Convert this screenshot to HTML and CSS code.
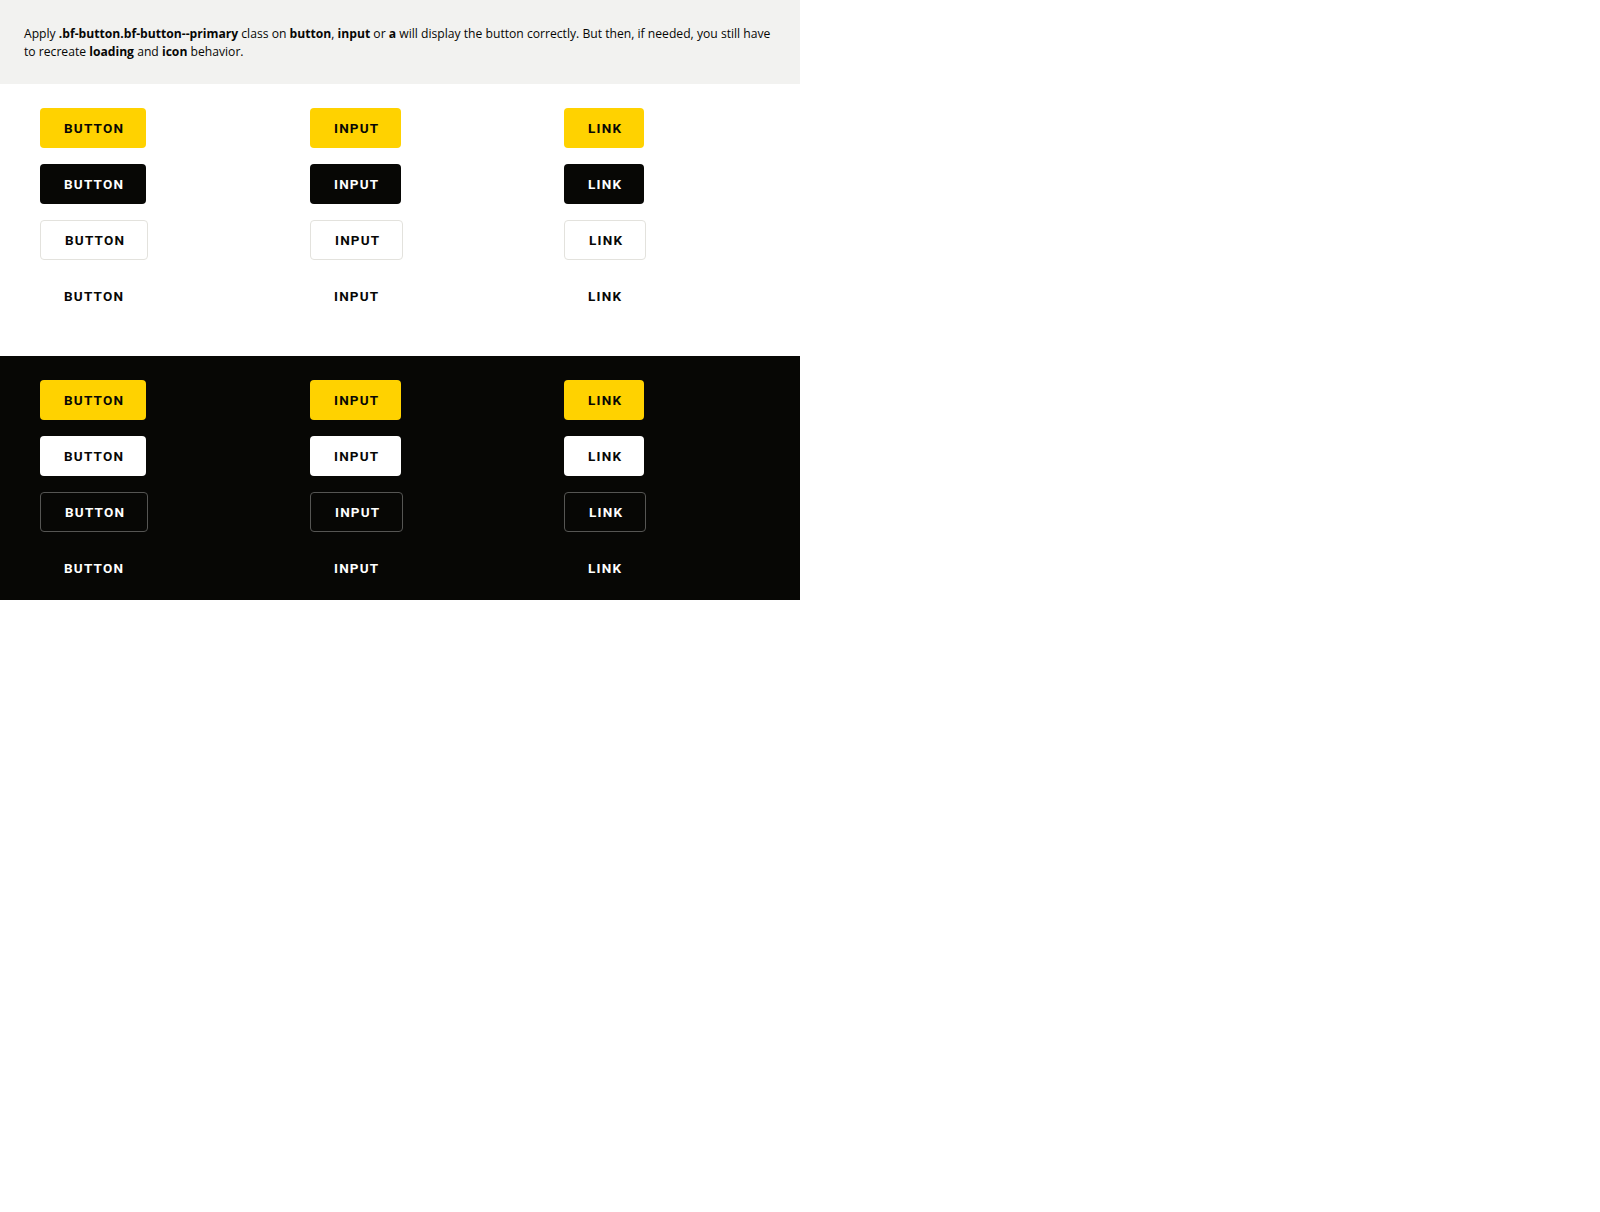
FILE: index.html
```html
<!DOCTYPE html>
<html>
<head>
<meta charset="utf-8">
<link rel="stylesheet" href="styles.css">
</head>
<body>
<div class="page">
  <div class="note">Apply <b>.bf-button.bf-button--primary</b> class on <b>button</b>, <b>input</b> or <b>a</b> will display the button correctly. But then, if needed, you still have to recreate <b>loading</b> and <b>icon</b> behavior.</div>
  <div class="demo demo--light">
    <div class="col">
      <span class="btn btn--primary">BUTTON</span>
      <span class="btn btn--secondary">BUTTON</span>
      <span class="btn btn--outline">BUTTON</span>
      <span class="btn btn--ghost">BUTTON</span>
    </div>
    <div class="col">
      <span class="btn btn--primary">INPUT</span>
      <span class="btn btn--secondary">INPUT</span>
      <span class="btn btn--outline">INPUT</span>
      <span class="btn btn--ghost">INPUT</span>
    </div>
    <div class="col">
      <span class="btn btn--primary">LINK</span>
      <span class="btn btn--secondary">LINK</span>
      <span class="btn btn--outline">LINK</span>
      <span class="btn btn--ghost">LINK</span>
    </div>
  </div>
  <div class="demo demo--dark">
    <div class="col">
      <span class="btn btn--primary">BUTTON</span>
      <span class="btn btn--secondary">BUTTON</span>
      <span class="btn btn--outline">BUTTON</span>
      <span class="btn btn--ghost">BUTTON</span>
    </div>
    <div class="col">
      <span class="btn btn--primary">INPUT</span>
      <span class="btn btn--secondary">INPUT</span>
      <span class="btn btn--outline">INPUT</span>
      <span class="btn btn--ghost">INPUT</span>
    </div>
    <div class="col">
      <span class="btn btn--primary">LINK</span>
      <span class="btn btn--secondary">LINK</span>
      <span class="btn btn--outline">LINK</span>
      <span class="btn btn--ghost">LINK</span>
    </div>
  </div>
</div>
</body>
</html>
```

FILE: styles.css
```css
html, body {
  margin: 0;
  padding: 0;
  background: #ffffff;
}

.page {
  width: 800px;
}

.note {
  background: #f2f2f0;
  padding: 25px 24px 23px;
  font-family: "Open Sans", sans-serif;
  font-size: 12.15px;
  line-height: 18px;
  color: #070705;
}

.note b {
  font-weight: 700;
}

.demo {
  display: grid;
  grid-template-columns: 270px 254px 1fr;
  padding: 24px 40px 40px;
}

.demo--dark {
  background: #070705;
  padding-bottom: 12px;
}

.col {
  display: flex;
  flex-direction: column;
  align-items: flex-start;
  gap: 16px;
}

.btn {
  display: inline-flex;
  align-items: center;
  box-sizing: content-box;
  height: 40px;
  padding: 0 22px 0 24px;
  border-radius: 4px;
  font-family: Roboto, "Liberation Sans", sans-serif;
  font-weight: 700;
  font-size: 13.5px;
  letter-spacing: 1.2px;
  color: #070705;
}

.btn--primary {
  background: #ffd200;
}

.btn--secondary {
  background: #070705;
  color: #ffffff;
}

.btn--outline {
  border: 1px solid #e3e2dd;
  height: 38px;
}

.btn--ghost {
  background: transparent;
}

.demo--dark .btn--secondary {
  background: #ffffff;
  color: #070705;
}

.demo--dark .btn--outline {
  border-color: #555553;
  color: #ffffff;
}

.demo--dark .btn--ghost {
  color: #ffffff;
}
```
